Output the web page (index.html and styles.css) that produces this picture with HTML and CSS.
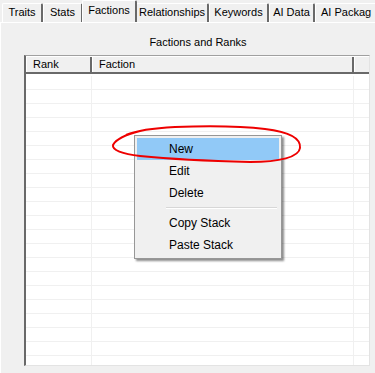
FILE: index.html
```html
<!DOCTYPE html>
<html lang="en">
<head>
    <meta charset="UTF-8">
    <title>Factions and Ranks</title>
    <link rel="stylesheet" href="styles.css">
</head>
<body>

    <div class="tabs">
        <div class="tab tab-traits">Traits</div>
        <div class="tab tab-stats">Stats</div>
        <div class="tab tab-factions active">Factions</div>
        <div class="tab tab-rel">Relationships</div>
        <div class="tab tab-keys">Keywords</div>
        <div class="tab tab-ai">AI Data</div>
        <div class="tab tab-pkg">AI Packag</div>
    </div>

    <div class="panel">
        <div class="caption">Factions and Ranks</div>

        <div class="list">
            <div class="list-head">
                <div class="col col-rank">Rank</div>
                <div class="col col-faction">Faction</div>
                <div class="col col-extra"></div>
            </div>
            <div class="list-body" id="rows"></div>
        </div>
    </div>

    <div class="menu">
        <div class="menu-item selected">New</div>
        <div class="menu-item">Edit</div>
        <div class="menu-item">Delete</div>
        <div class="menu-sep"></div>
        <div class="menu-item">Copy Stack</div>
        <div class="menu-item">Paste Stack</div>
    </div>

    <svg class="scribble" width="375" height="373" viewBox="0 0 375 373">
        <path d="M140 131 C128 134, 116 139, 113 145 C112 150, 122 154, 140 156
                 C170 159, 210 161, 250 162 C280 162, 299 157, 300 148
                 C301 139, 290 132, 265 129 C240 126, 205 126, 175 127
                 C155 128, 138 130, 126 135"
              fill="none" stroke="#ee0000" stroke-width="2" />
    </svg>

    <script>
        // empty list rows
        const rows = document.getElementById('rows');
        for (let i = 0; i < 21; i++) {
            rows.insertAdjacentHTML('beforeend',
                '<div class="row"><div class="cell c1"></div><div class="cell c2"></div><div class="cell c3"></div></div>');
        }
    </script>

</body>
</html>
```

FILE: styles.css
```css
body {
    margin: 0;
    padding: 0;
    width: 375px;
    height: 373px;
    overflow: hidden;
    background-color: #f0f0f0;
    font-family: Tahoma, "DejaVu Sans", "Liberation Sans", sans-serif;
    font-size: 11px;
    color: #000;
    position: relative;
}

/* tab strip */
.tabs {
    display: flex;
    align-items: flex-end;
    height: 22px;
    padding-left: 2px;
    white-space: nowrap;
}

.tab {
    box-sizing: border-box;
    height: 19px;
    line-height: 17px;
    text-align: center;
    background-color: #f0f0f0;
    border-top: 1px solid #ffffff;
    border-left: 1px solid #ffffff;
    border-right: 2px solid #696969;
    border-top-left-radius: 2px;
    border-top-right-radius: 2px;
    font-family: "Liberation Sans", Arial, sans-serif;
    flex-shrink: 0;
}

.tab-traits { width: 41px; }
.tab-stats { width: 40px; }
.tab-rel { width: 73px; }
.tab-keys { width: 60px; }
.tab-ai { width: 46px; }
.tab-pkg { width: 70px; text-align: left; padding-left: 5px; border-right: none; }

.tab.active {
    width: 55px;
    height: 22px;
    line-height: 19px;
    margin-left: -1px;
    margin-right: -1px;
    position: relative;
    z-index: 1;
    border-right: 2px solid #696969;
}

/* tab page */
.panel {
    height: 351px;
    box-sizing: border-box;
    border-top: 1px solid #ffffff;
    border-left: 1px solid #ffffff;
    padding-top: 12px;
}

.caption {
    text-align: center;
    font-family: "Liberation Sans", Arial, sans-serif;
    height: 14px;
    line-height: 14px;
    padding-left: 20px;
}

/* list view */
.list {
    margin-top: 6px;
    margin-left: 23px;
    width: 346px;
    height: 311px;
    box-sizing: border-box;
    background-color: #ffffff;
    border-top: 1px solid #a0a0a0;
    border-left: 2px solid #696969;
    border-right: 1px solid #e3e3e3;
    border-bottom: 1px solid #e3e3e3;
    overflow: hidden;
    font-family: "Liberation Sans", Arial, sans-serif;
}

.list-head {
    display: flex;
    height: 18px;
    background-color: #f0f0f0;
    border-top: 1px solid #ffffff;
    border-bottom: 2px solid #696969;
    box-sizing: border-box;
}

.col {
    box-sizing: border-box;
    line-height: 15px;
    padding-left: 6px;
    border-left: 1px solid #ffffff;
    border-right: 2px solid #696969;
}

.col-rank { width: 66px; }
.col-faction { width: 262px; }
.col-extra { flex: 1; border-right: none; }

.list-body {
    padding-top: 2px;
}

.row {
    display: flex;
    height: 14px;
    box-sizing: border-box;
    border-bottom: 1px solid #f0f0f0;
}

.cell {
    box-sizing: border-box;
    border-right: 1px solid #f0f0f0;
}

.c1 { width: 66px; }
.c2 { width: 262px; }
.c3 { flex: 1; border-right: none; }

/* context menu */
.menu {
    position: absolute;
    left: 134px;
    top: 135px;
    width: 148px;
    box-sizing: border-box;
    padding: 2px;
    background-color: #f0f0f0;
    border: 1px solid #979797;
    box-shadow: 2px 2px 2px rgba(0, 0, 0, 0.45);
    font-family: "Liberation Sans", Arial, sans-serif;
    font-size: 12px;
}

.menu-item {
    height: 22px;
    line-height: 22px;
    padding-left: 32px;
}

.menu-item.selected {
    background-color: #91c9f7;
}

.menu-sep {
    height: 1px;
    margin: 3px 2px 3px 29px;
    background-color: #d7d7d7;
    border-bottom: 1px solid #ffffff;
}

/* red hand-drawn mark */
.scribble {
    position: absolute;
    left: 0;
    top: 0;
    pointer-events: none;
}
```
